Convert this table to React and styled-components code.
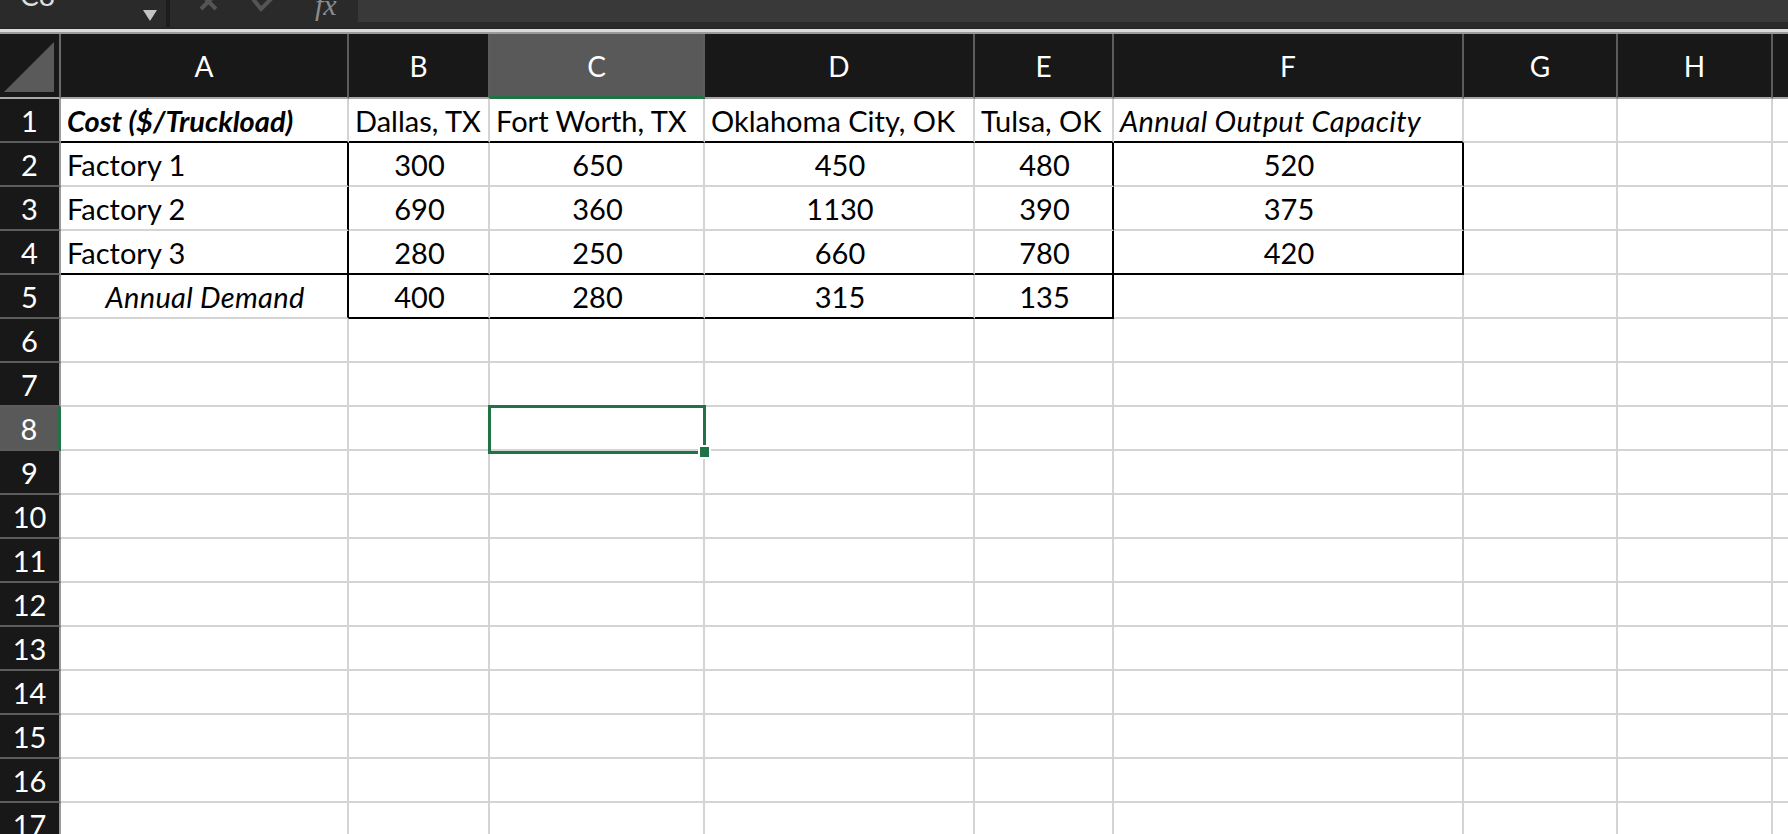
import React from 'react'
import styled, {createGlobalStyle, css} from 'styled-components'

const GlobalStyle = createGlobalStyle`
  html, body {
    margin: 0;
    padding: 0;
    background: #ffffff;
    overflow: hidden;
  }
  body {
    font-family: Lato, "Open Sans", sans-serif;
  }
`

const Page = styled.div`
  width: 1788px;
  height: 834px;
  overflow: hidden;
  background: #fff;
`

// Formula bar (cut off at the top of the screenshot)
const FormulaBar = styled.div`
  display: flex;
  height: 27px;
  background: #2a2a2a;
  overflow: hidden;
`

const NameBox = styled.div`
  width: 166px;
  display: flex;
  align-items: flex-end;
  justify-content: space-between;
  padding: 0 9px 0 20px;
  box-sizing: border-box;
`

const NameText = styled.span`
  font-family: Lato, sans-serif;
  font-size: 28px;
  line-height: 30px;
  color: #dedede;
  margin-top: -20px;
  align-self: flex-start;
`

const DropArrow = styled.span`
  width: 0;
  height: 0;
  border-left: 7px solid transparent;
  border-right: 7px solid transparent;
  border-top: 11px solid #c4c4c4;
  margin-bottom: 6px;
`

const Sep = styled.div`
  width: 4px;
  background: #1c1c1c;
`

const BarIcons = styled.div`
  width: 188px;
  display: flex;
  align-items: flex-start;
  padding-left: 29px;
  gap: 33px;
  box-sizing: border-box;
`

const Fx = styled.span`
  font-family: "Liberation Serif", serif;
  font-style: italic;
  font-size: 30px;
  line-height: 30px;
  margin-top: -10px;
  color: #8c8c8c;
  margin-left: 4px;
`

const FormulaInput = styled.div`
  flex: 1;
  height: 22px;
  background: #393939;
`

const Divider = styled.div`
  height: 7px;
  box-sizing: border-box;
  border-top: 2px solid #262626;
  background: #dadada;
  border-bottom: 2px solid #9a9a9a;
`

const Sheet = styled.div`
  display: grid;
  grid-template-columns: 61px 288px 141px 215px 270px 139px 350px 154px 155px 155px;
  grid-template-rows: 65px;
  grid-auto-rows: 44px;
`

const Corner = styled.div`
  background: #181818;
  border-right: 2px solid #6a6a6a;
  border-bottom: 2px solid #a8a8a8;
  display: flex;
  align-items: flex-end;
  justify-content: flex-end;
  padding: 0 5px 5px 0;
  box-sizing: border-box;
`

const ColHead = styled.div`
  background: ${p => (p.$active ? '#595959' : '#181818')};
  color: #fff;
  font-size: 28px;
  display: flex;
  align-items: center;
  justify-content: center;
  box-sizing: border-box;
  border-right: 2px solid #5c5c5c;
  border-bottom: ${p => (p.$active ? '3px solid #217346' : '2px solid #a8a8a8')};
  padding-top: ${p => (p.$active ? '1px' : '0')};
`

const RowHead = styled.div`
  background: ${p => (p.$active ? '#595959' : '#181818')};
  color: #fff;
  font-size: 29px;
  display: flex;
  align-items: center;
  justify-content: center;
  box-sizing: border-box;
  border-right: ${p => (p.$active ? '3px solid #217346' : '2px solid #9a9a9a')};
  border-bottom: 2px solid #5c5c5c;
`

const Cell = styled.div`
  position: relative;
  box-sizing: border-box;
  display: flex;
  align-items: center;
  justify-content: ${p => (p.$center ? 'center' : 'flex-start')};
  padding: 0 0 0 6px;
  font-size: 29px;
  color: #000;
  white-space: nowrap;
  border-right: 2px solid ${p => (p.$rb ? '#000' : '#d4d4d4')};
  border-bottom: 2px solid ${p => (p.$bb ? '#000' : '#d4d4d4')};
  ${p => p.$center && css`padding: 0 0 0 2px;`}
  ${p => p.$italic && css`font-style: italic; letter-spacing: 0.3px;`}
  ${p => p.$bold && css`font-weight: 700; letter-spacing: 0;`}
`

const Selection = styled.div`
  position: absolute;
  z-index: 2;
  left: -2px;
  top: -2px;
  right: -3px;
  bottom: -5px;
  border: 3px solid #217346;
  pointer-events: none;
`

const FillHandle = styled.div`
  position: absolute;
  right: -6px;
  bottom: -6px;
  width: 9px;
  height: 10px;
  background: #217346;
  box-shadow: 0 0 0 2px #fff;
`

const COLS = ['A', 'B', 'C', 'D', 'E', 'F', 'G', 'H', 'I']

const DATA = {
  1: {
    A: {t: 'Cost ($/Truckload)', bold: true, italic: true, bb: true},
    B: {t: 'Dallas, TX', bb: true},
    C: {t: 'Fort Worth, TX', bb: true},
    D: {t: 'Oklahoma City, OK', bb: true},
    E: {t: 'Tulsa, OK', bb: true},
    F: {t: 'Annual Output Capacity', italic: true, bb: true},
  },
  2: {
    A: {t: 'Factory 1', rb: true},
    B: {t: '300', center: true},
    C: {t: '650', center: true},
    D: {t: '450', center: true},
    E: {t: '480', center: true, rb: true},
    F: {t: '520', center: true, rb: true},
  },
  3: {
    A: {t: 'Factory 2', rb: true},
    B: {t: '690', center: true},
    C: {t: '360', center: true},
    D: {t: '1130', center: true},
    E: {t: '390', center: true, rb: true},
    F: {t: '375', center: true, rb: true},
  },
  4: {
    A: {t: 'Factory 3', rb: true, bb: true},
    B: {t: '280', center: true, bb: true},
    C: {t: '250', center: true, bb: true},
    D: {t: '660', center: true, bb: true},
    E: {t: '780', center: true, rb: true, bb: true},
    F: {t: '420', center: true, rb: true, bb: true},
  },
  5: {
    A: {t: 'Annual Demand', italic: true, center: true, rb: true},
    B: {t: '400', center: true, bb: true},
    C: {t: '280', center: true, bb: true},
    D: {t: '315', center: true, bb: true},
    E: {t: '135', center: true, rb: true, bb: true},
  },
}

const ROWS = Array.from({length: 17}, (_, i) => i + 1)
const ACTIVE_COL = 'C'
const ACTIVE_ROW = 8

const CloseIcon = () => (
  <svg width="20" height="14" viewBox="0 0 20 14">
    <path d="M2 -6 L17 9 M17 -6 L2 9" stroke="#555" strokeWidth="4" />
  </svg>
)

const CheckIcon = () => (
  <svg width="26" height="14" viewBox="0 0 26 14">
    <path d="M1 -1 L9 9 L25 -7" stroke="#555" strokeWidth="4" fill="none" />
  </svg>
)

const CornerTriangle = () => (
  <svg width="50" height="50" viewBox="0 0 50 50">
    <polygon points="50,0 50,50 0,50" fill="#5a5a5a" />
  </svg>
)

export default function App() {
  return (
    <Page>
      <GlobalStyle />
      <FormulaBar>
        <NameBox>
          <NameText>C8</NameText>
          <DropArrow />
        </NameBox>
        <Sep />
        <BarIcons>
          <CloseIcon />
          <CheckIcon />
          <Fx>fx</Fx>
        </BarIcons>
        <FormulaInput />
      </FormulaBar>
      <Divider />
      <Sheet>
        <Corner>
          <CornerTriangle />
        </Corner>
        {COLS.map(c => (
          <ColHead key={c} $active={c === ACTIVE_COL}>
            {c === 'I' ? '' : c}
          </ColHead>
        ))}
        {ROWS.map(r => (
          <React.Fragment key={r}>
            <RowHead $active={r === ACTIVE_ROW}>{r}</RowHead>
            {COLS.map(c => {
              const d = (DATA[r] && DATA[r][c]) || {}
              const selected = r === ACTIVE_ROW && c === ACTIVE_COL
              return (
                <Cell
                  key={c}
                  $center={d.center}
                  $italic={d.italic}
                  $bold={d.bold}
                  $rb={d.rb}
                  $bb={d.bb}
                >
                  {d.t}
                  {selected && (
                    <Selection>
                      <FillHandle />
                    </Selection>
                  )}
                </Cell>
              )
            })}
          </React.Fragment>
        ))}
      </Sheet>
    </Page>
  )
}
